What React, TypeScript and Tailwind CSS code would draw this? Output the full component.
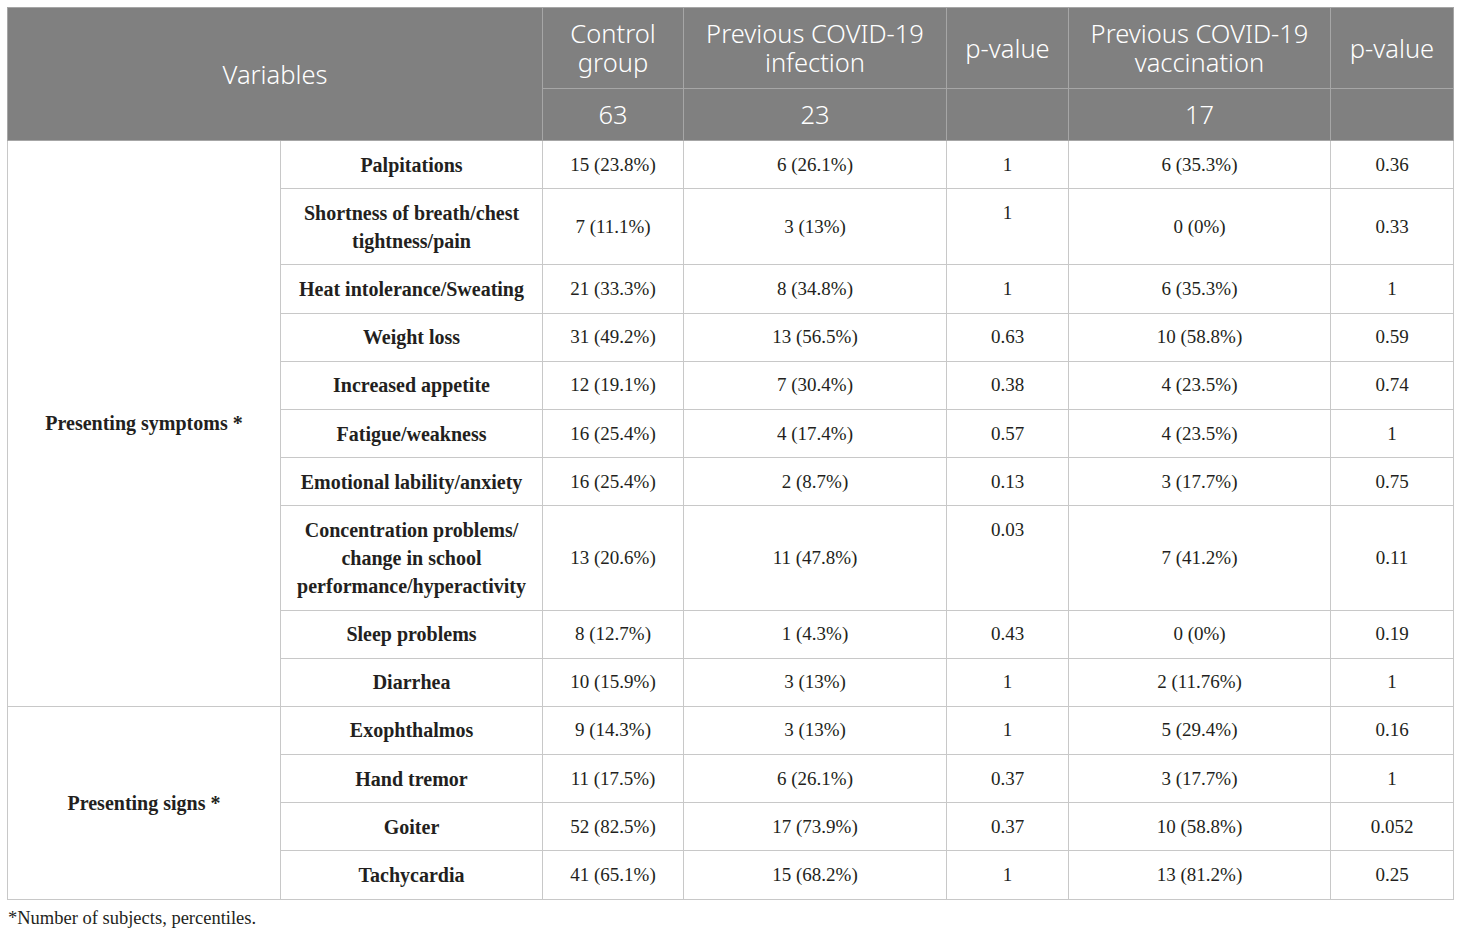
const rows = [
  { name: ["Palpitations"], c: "15 (23.8%)", i: "6 (26.1%)", p1: "1", v: "6 (35.3%)", p2: "0.36" },
  { name: ["Shortness of breath/chest", "tightness/pain"], c: "7 (11.1%)", i: "3 (13%)", p1: "1", p1Top: true, v: "0 (0%)", p2: "0.33" },
  { name: ["Heat intolerance/Sweating"], c: "21 (33.3%)", i: "8 (34.8%)", p1: "1", v: "6 (35.3%)", p2: "1" },
  { name: ["Weight loss"], c: "31 (49.2%)", i: "13 (56.5%)", p1: "0.63", v: "10 (58.8%)", p2: "0.59" },
  { name: ["Increased appetite"], c: "12 (19.1%)", i: "7 (30.4%)", p1: "0.38", v: "4 (23.5%)", p2: "0.74" },
  { name: ["Fatigue/weakness"], c: "16 (25.4%)", i: "4 (17.4%)", p1: "0.57", v: "4 (23.5%)", p2: "1" },
  { name: ["Emotional lability/anxiety"], c: "16 (25.4%)", i: "2 (8.7%)", p1: "0.13", v: "3 (17.7%)", p2: "0.75" },
  {
    name: ["Concentration problems/", "change in school", "performance/hyperactivity"],
    c: "13 (20.6%)",
    i: "11 (47.8%)",
    p1: "0.03",
    p1Top: true,
    v: "7 (41.2%)",
    p2: "0.11",
  },
  { name: ["Sleep problems"], c: "8 (12.7%)", i: "1 (4.3%)", p1: "0.43", v: "0 (0%)", p2: "0.19" },
  { name: ["Diarrhea"], c: "10 (15.9%)", i: "3 (13%)", p1: "1", v: "2 (11.76%)", p2: "1" },
  { name: ["Exophthalmos"], c: "9 (14.3%)", i: "3 (13%)", p1: "1", v: "5 (29.4%)", p2: "0.16" },
  { name: ["Hand tremor"], c: "11 (17.5%)", i: "6 (26.1%)", p1: "0.37", v: "3 (17.7%)", p2: "1" },
  { name: ["Goiter"], c: "52 (82.5%)", i: "17 (73.9%)", p1: "0.37", v: "10 (58.8%)", p2: "0.052" },
  { name: ["Tachycardia"], c: "41 (65.1%)", i: "15 (68.2%)", p1: "1", v: "13 (81.2%)", p2: "0.25" },
];

const td = "border border-[#c8c8c8] px-2 py-[9.6px] text-center align-middle";
const th = "border border-[#a6a6a6] px-2 text-center align-middle font-light";

export default function App() {
  return (
    <div className="bg-white w-[1460px] h-[937px] pt-[7px] px-[7px] font-['Liberation_Serif',serif] text-[#231f20]">
      <table className="w-[1446px] table-fixed border-collapse text-[19px] leading-[28px]">
        <colgroup>
          <col className="w-[273px]" />
          <col className="w-[262px]" />
          <col className="w-[141px]" />
          <col className="w-[263px]" />
          <col className="w-[122px]" />
          <col className="w-[262px]" />
          <col className="w-[123px]" />
        </colgroup>
        <thead className="bg-[#808080] text-white font-['Noto_Sans',sans-serif] text-[25.5px] leading-[29px]">
          <tr className="h-[81px]">
            <th colSpan={2} rowSpan={2} className={th}>
              Variables
            </th>
            <th className={th}>
              Control
              <br />
              group
            </th>
            <th className={th}>
              Previous COVID-19
              <br />
              infection
            </th>
            <th className={th}>p-value</th>
            <th className={th}>
              Previous COVID-19
              <br />
              vaccination
            </th>
            <th className={th}>p-value</th>
          </tr>
          <tr className="h-[52px]">
            <th className={th}>63</th>
            <th className={th}>23</th>
            <th className={th}></th>
            <th className={th}>17</th>
            <th className={th}></th>
          </tr>
        </thead>
        <tbody>
          {rows.map((r, idx) => (
            <tr key={idx}>
              {idx === 0 && (
                <td rowSpan={10} className={td + " font-bold text-[20px]"}>
                  Presenting symptoms *
                </td>
              )}
              {idx === 10 && (
                <td rowSpan={4} className={td + " font-bold text-[20px]"}>
                  Presenting signs *
                </td>
              )}
              <td className={td + " font-bold text-[20px]"}>
                {r.name.map((line, k) => (
                  <div key={k}>{line}</div>
                ))}
              </td>
              <td className={td}>{r.c}</td>
              <td className={td}>{r.i}</td>
              <td className={r.p1Top ? td + " !align-top" : td}>{r.p1}</td>
              <td className={td}>{r.v}</td>
              <td className={td}>{r.p2}</td>
            </tr>
          ))}
        </tbody>
      </table>
      <p className="mt-[6px] ml-[1px] text-[18.5px] leading-[24px]">*Number of subjects, percentiles.</p>
    </div>
  );
}
